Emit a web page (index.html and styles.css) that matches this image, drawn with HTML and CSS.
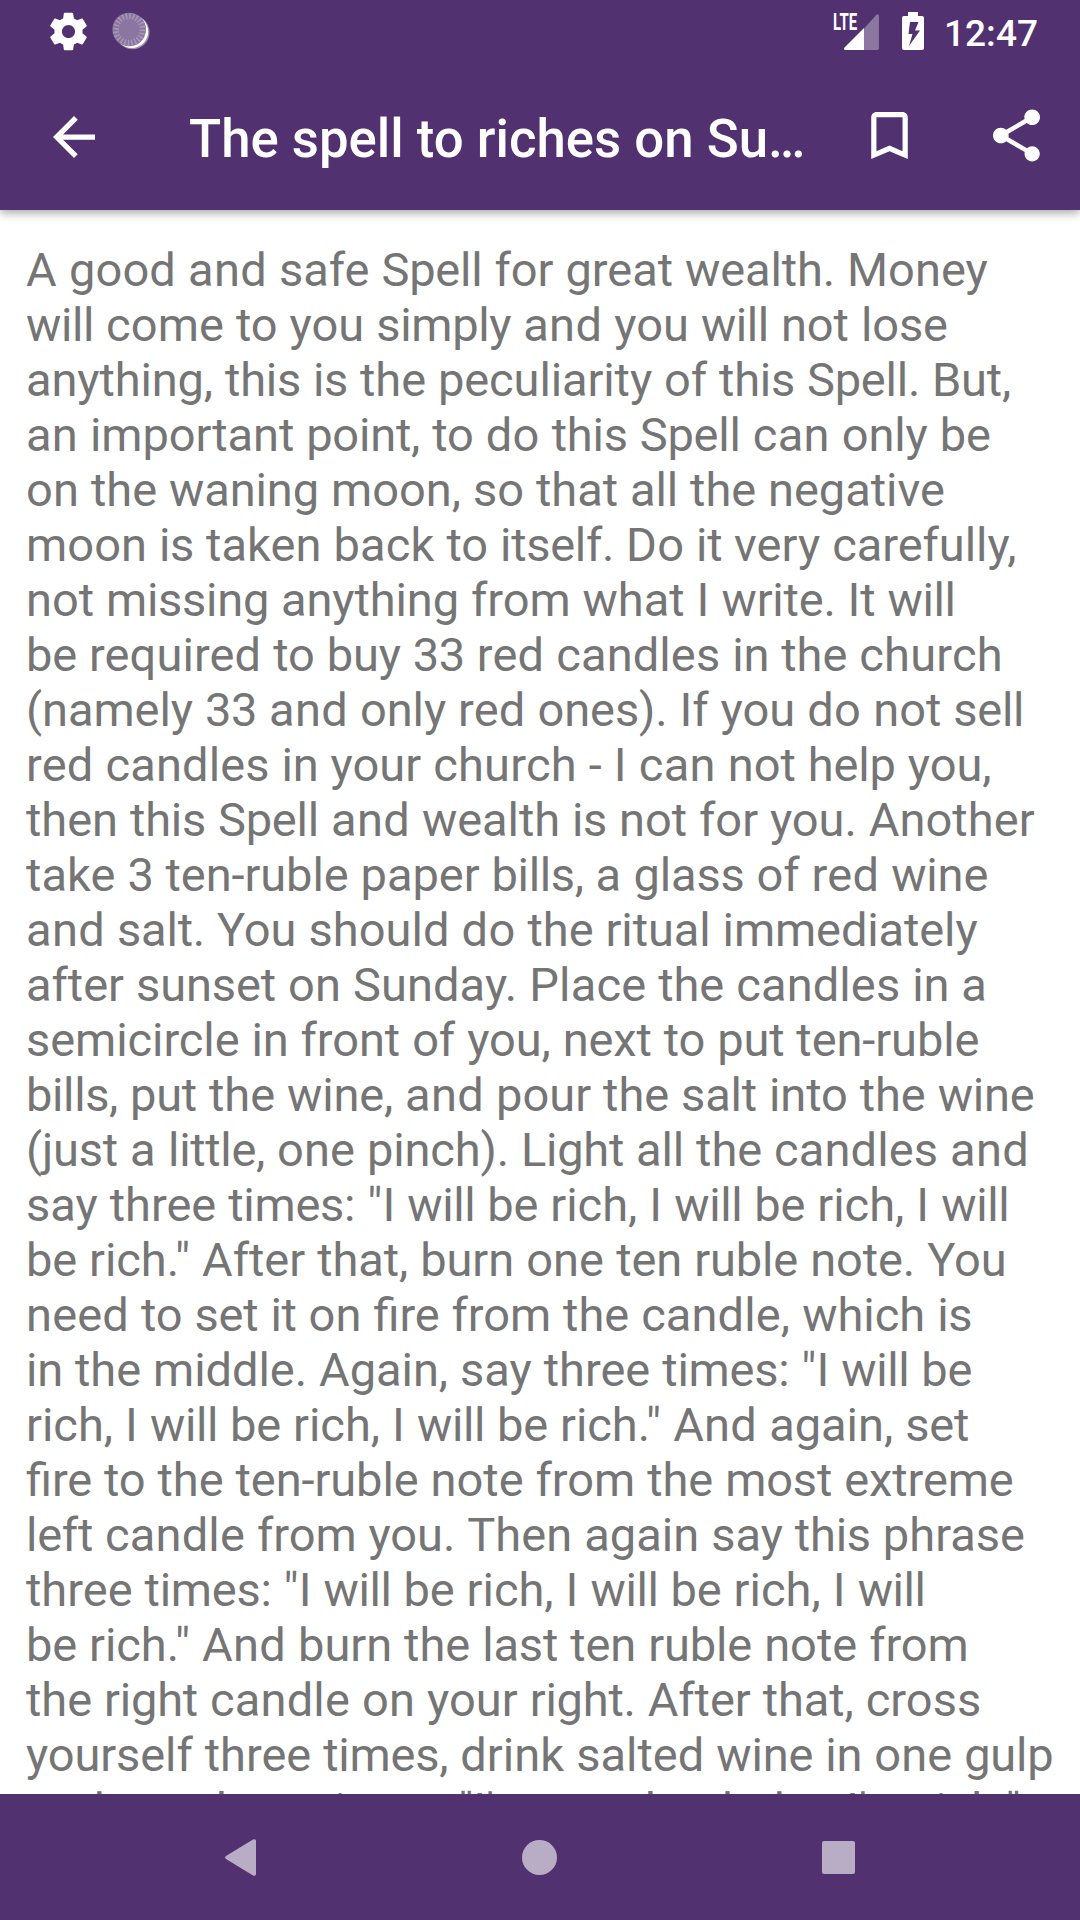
FILE: index.html
```html
<!DOCTYPE html>
<html lang="en">

<head>
    <meta charset="UTF-8">
    <meta name="viewport" content="width=device-width, initial-scale=1.0">
    <title>The spell to riches on Sunday</title>
    <link rel="stylesheet" href="styles.css">
</head>

<body>
    <div class="screen">
        <header class="header">
            <div class="status-bar">
                <svg class="icon-gear" viewBox="0 0 24 24">
                    <path d="M19.43 12.98c.04-.32.07-.64.07-.98s-.03-.66-.07-.98l2.11-1.65c.19-.15.24-.42.12-.64l-2-3.46c-.12-.22-.39-.3-.61-.22l-2.49 1c-.52-.4-1.08-.73-1.69-.98l-.38-2.65C14.46 2.18 14.25 2 14 2h-4c-.25 0-.46.18-.49.42l-.38 2.65c-.61.25-1.17.59-1.69.98l-2.49-1c-.23-.09-.49 0-.61.22l-2 3.46c-.13.22-.07.49.12.64l2.11 1.65c-.04.32-.07.65-.07.98s.03.66.07.98l-2.11 1.65c-.19.15-.24.42-.12.64l2 3.46c.12.22.39.3.61.22l2.49-1c.52.4 1.08.73 1.69.98l.38 2.65c.03.24.24.42.49.42h4c.25 0 .46-.18.49-.42l.38-2.65c.61-.25 1.17-.59 1.69-.98l2.49 1c.23.09.49 0 .61-.22l2-3.46c.12-.22.07-.49-.12-.64l-2.11-1.65zM12 15.5c-1.93 0-3.5-1.57-3.5-3.5s1.57-3.5 3.5-3.5 3.5 1.57 3.5 3.5-1.57 3.5-3.5 3.5z" />
                </svg>
                <svg class="icon-sync" viewBox="0 0 38 38">
                    <circle cx="20.5" cy="20.3" r="17" opacity=".45" />
                    <circle cx="19.7" cy="19.5" r="16.5" />
                    <circle class="disc" cx="17.2" cy="17.5" r="16.8" />
                    <circle class="ticks" cx="17.2" cy="17.5" r="13.4" pathLength="72" />
                </svg>
                <span class="spacer"></span>
                <div class="signal">
                    <span class="lte">LTE</span>
                    <svg class="icon-signal" viewBox="0 0 35 36">
                        <path opacity=".34" d="M20 14.500L32 1.200q3-2.500 3 1.800v31q0 2-2 2H20z" />
                        <path d="M20 14v22H1.500q-2.500-.5-1-2.500z" />
                    </svg>
                </div>
                <svg class="icon-battery" viewBox="0 0 22 38">
                    <path fill-rule="evenodd" d="M6 0h10v4h4q2 0 2 2v30q0 2-2 2H2q-2 0-2-2V6q0-2 2-2h4zM8 10L6.500 22h4L7 34l11-15.500h-5L16.500 10z" />
                </svg>
                <span class="clock">12:47</span>
            </div>
            <div class="app-bar">
                <svg class="icon-back" viewBox="4 4 16 16">
                    <path d="M20 11H7.830l5.590-5.590L12 4l-8 8 8 8 1.410-1.410L7.830 13H20v-2z" />
                </svg>
                <h1 class="title">The spell to riches on Su…</h1>
                <svg class="icon-bookmark" viewBox="5 3 14 18">
                    <path d="M17 3H7c-1.100 0-2 .9-2 2v16l7-3 7 3V5c0-1.100-.9-2-2-2zm0 15l-5-2.180L7 18V5h10v13z" />
                </svg>
                <svg class="icon-share" viewBox="3 2 18 20">
                    <path d="M18 16.080c-.76 0-1.440.3-1.960.77L8.910 12.700c.05-.23.09-.46.09-.7s-.04-.47-.09-.7l7.050-4.110c.54.5 1.250.81 2.040.81 1.660 0 3-1.340 3-3s-1.340-3-3-3-3 1.340-3 3c0 .24.04.47.09.7L8.040 9.810C7.500 9.310 6.790 9 6 9c-1.660 0-3 1.340-3 3s1.340 3 3 3c.79 0 1.500-.31 2.040-.81l7.120 4.160c-.05.21-.08.43-.08.65 0 1.610 1.310 2.920 2.920 2.920s2.920-1.310 2.920-2.920-1.310-2.920-2.920-2.920z" />
                </svg>
            </div>
        </header>

        <main class="content">
            <p class="text">A good and safe Spell for great wealth. Money
will come to you simply and you will not lose
anything, this is the peculiarity of this Spell. But,
an important point, to do this Spell can only be
on the waning moon, so that all the negative
moon is taken back to itself. Do it very carefully,
not missing anything from what I write. It will
be required to buy 33 red candles in the church
(namely 33 and only red ones). If you do not sell
red candles in your church - I can not help you,
then this Spell and wealth is not for you. Another
take 3 ten-ruble paper bills, a glass of red wine
and salt. You should do the ritual immediately
after sunset on Sunday. Place the candles in a
semicircle in front of you, next to put ten-ruble
bills, put the wine, and pour the salt into the wine
(just a little, one pinch). Light all the candles and
say three times: "I will be rich, I will be rich, I will
be rich." After that, burn one ten ruble note. You
need to set it on fire from the candle, which is
in the middle. Again, say three times: "I will be
rich, I will be rich, I will be rich." And again, set
fire to the ten-ruble note from the most extreme
left candle from you. Then again say this phrase
three times: "I will be rich, I will be rich, I will
be rich." And burn the last ten ruble note from
the right candle on your right. After that, cross
yourself three times, drink salted wine in one gulp
and say three times: "I'm very healed — I'm rich."</p>
        </main>

        <nav class="nav-bar">
            <svg class="nav-back" viewBox="0 0 31 37">
                <path d="M1 17L28 .6Q31-.5 31 2v33q0 2.500-3 1.400L1 20q-2-1.500 0-3z" />
            </svg>
            <span class="nav-home"></span>
            <span class="nav-recent"></span>
        </nav>
    </div>

    <script src="script.js"></script>
</body>

</html>
```
FILE: styles.css
```css
body {
    margin: 0;
    font-family: Roboto, sans-serif;
    background-color: #fff;
}

.screen {
    display: flex;
    flex-direction: column;
    height: 1920px;
    overflow: hidden;
}

.header {
    height: 210px;
    flex-shrink: 0;
    background-color: #51316f;
    color: #fff;
    box-shadow: 0 3px 9px rgba(0, 0, 0, 0.35);
    z-index: 1;
}

svg {
    display: block;
    flex-shrink: 0;
    fill: #fff;
}

.status-bar {
    display: flex;
    align-items: flex-start;
    height: 63px;
    padding: 12px 42px 0 47px;
    box-sizing: border-box;
}

.icon-gear {
    width: 45px;
    height: 45px;
    margin: -3px 0 0 -1px;
}

.icon-sync {
    width: 38px;
    height: 38px;
    margin-left: 21px;
}

.icon-sync .disc {
    fill: #8b76a1;
}

.icon-sync .ticks {
    fill: none;
    stroke: #a897b9;
    stroke-width: 6;
    stroke-dasharray: 1.3 1.7;
}

.spacer {
    flex: 1;
}

.signal {
    display: flex;
    width: 46px;
    margin-right: 23px;
}

.lte {
    width: 11px;
    font-size: 23px;
    font-weight: 700;
    line-height: 22px;
    transform: scaleX(0.65);
    transform-origin: 0 0;
}

.icon-signal {
    width: 35px;
    height: 36px;
    margin-top: 2px;
}

.icon-battery {
    width: 22px;
    height: 38px;
    margin-right: 20px;
}

.clock {
    font-size: 37px;
    font-weight: 500;
    line-height: 43px;
}

.app-bar {
    display: flex;
    align-items: center;
    height: 147px;
    padding: 0 40px 0 53px;
}

.icon-back {
    width: 42px;
    height: 42px;
}

.title {
    flex: 1;
    margin: 5px 0 0 94px;
    font-size: 52.75px;
    font-weight: 500;
    line-height: 62px;
    white-space: nowrap;
}

.icon-bookmark {
    width: 37px;
    height: 47px;
    margin: 0 85px 2px 0;
}

.icon-share {
    width: 47px;
    height: 53px;
    margin-bottom: 2px;
}

.content {
    flex: 1;
    overflow: hidden;
    padding: 32px 0 0 26px;
}

.text {
    margin: 0;
    color: #757575;
    font-size: 47px;
    line-height: 55px;
    white-space: pre;
    font-feature-settings: "liga" 1;
}

.nav-bar {
    display: flex;
    align-items: center;
    justify-content: space-between;
    height: 126px;
    flex-shrink: 0;
    box-sizing: border-box;
    padding: 0 225px;
    background-color: #51316f;
}

.nav-back {
    width: 31px;
    height: 37px;
    fill: #b9adc5;
}

.nav-home {
    width: 35px;
    height: 35px;
    border-radius: 50%;
    background-color: #b9adc5;
}

.nav-recent {
    width: 33px;
    height: 33px;
    border-radius: 2px;
    background-color: #b9adc5;
}
```
FILE: script.js
```javascript
// Snap glyph advances to whole pixels, one word at a time
const ctx = document.createElement('canvas').getContext('2d');

const snapWords = (el) => {
    const style = getComputedStyle(el);
    const size = parseFloat(style.fontSize);
    ctx.font = `${style.fontWeight} 2048px Roboto`;

    const words = el.textContent.match(/\S+|\s+/g);
    el.textContent = '';

    words.forEach(word => {
        let diff = 0;
        for (const ch of word) {
            if (ch === '\n') continue;
            const advance = ctx.measureText(ch).width * size / 2048;
            diff += Math.round(advance) - advance;
        }
        const span = document.createElement('span');
        span.textContent = word;
        span.style.letterSpacing = `${diff / word.length}px`;
        el.appendChild(span);
    });
}

document.querySelectorAll('.text, .clock').forEach(snapWords);
```
